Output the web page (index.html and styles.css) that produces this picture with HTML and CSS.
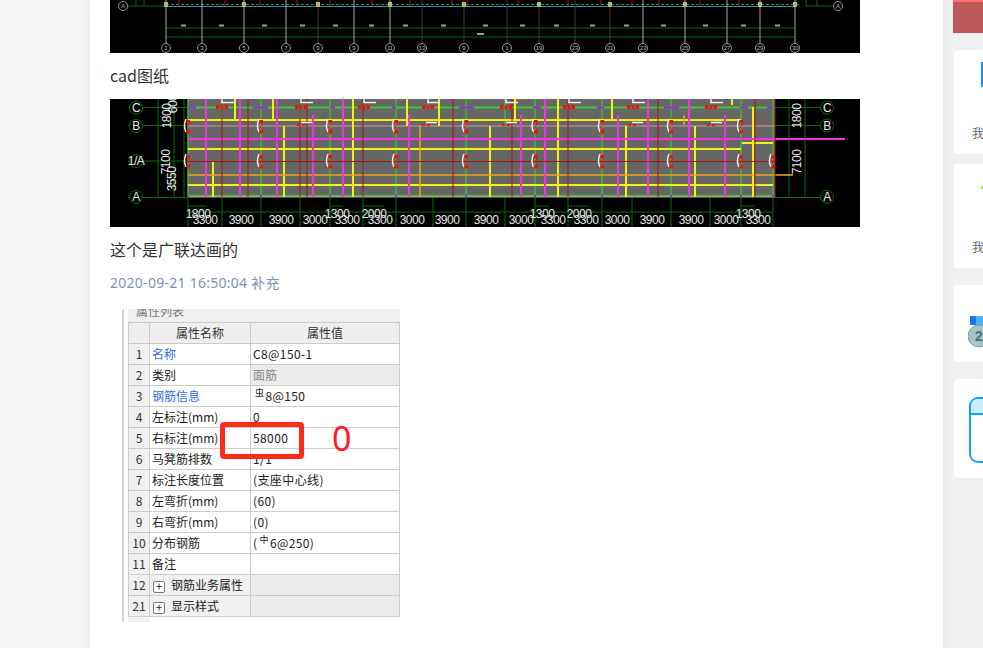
FILE: index.html
```html
<!DOCTYPE html>
<html lang="zh">
<head>
<meta charset="utf-8">
<title>cad图纸</title>
<link rel="stylesheet" href="styles.css">
</head>
<body>
<div class="page">
  <main class="post">
    <svg class="cad cad-top" viewBox="110 0 750 53" aria-label="cad drawing">
      <g class="thin-green">
        <path d="M128 6H166M136 0V6M144 0V6M805 6H833M817 0V6M806 0V6M166 28H795M166 37H795"/>
      </g>
      <path class="band-teal" d="M166 6.500H795"/>
      <path class="band-dash" d="M166 4.500H800"/>
      <g class="axis-bright">
        <path d="M166 0V43M202 0V43M244 0V43M286 0V43M354 0V43M390 0V43M643 0V43M685 0V43M727 0V43M760 0V43M795 0V43"/>
      </g>
      <g class="axis-dim">
        <path d="M318 0V43M422 0V43M464 0V43M507 0V43M539 0V43M575 0V43M610 0V43"/>
      </g>
      <g class="red-ticks">
        <path d="M179 0V6M225 0V6M260 0V6M297 0V6M330 0V6M372 0V6M410 0V6M452 0V6M467 0V6M518 0V6M568 0V6M601 0V6M632 0V6M659 0V6M700 0V6M739 0V6"/>
      </g>
      <g class="col-caps">
        <rect x="164" y="2" width="4" height="5"/><rect x="242" y="2" width="4" height="5"/><rect x="316" y="2" width="4" height="5"/><rect x="388" y="2" width="4" height="5"/><rect x="462" y="2" width="4" height="5"/><rect x="537" y="2" width="4" height="5"/><rect x="608" y="2" width="4" height="5"/><rect x="683" y="2" width="4" height="5"/><rect x="758" y="2" width="4" height="5"/><rect x="793" y="2" width="4" height="5"/>
      </g>
      <g class="bubbles">
        <circle cx="123" cy="6" r="4.500"/><circle cx="838" cy="6" r="4.500"/>
        <circle cx="166" cy="48" r="4.500"/><circle cx="202" cy="48" r="4.500"/><circle cx="244" cy="48" r="4.500"/><circle cx="286" cy="48" r="4.500"/><circle cx="318" cy="48" r="4.500"/><circle cx="354" cy="48" r="4.500"/><circle cx="390" cy="48" r="4.500"/><circle cx="422" cy="48" r="4.500"/><circle cx="464" cy="48" r="4.500"/><circle cx="507" cy="48" r="4.500"/><circle cx="539" cy="48" r="4.500"/><circle cx="575" cy="48" r="4.500"/><circle cx="610" cy="48" r="4.500"/><circle cx="643" cy="48" r="4.500"/><circle cx="685" cy="48" r="4.500"/><circle cx="727" cy="48" r="4.500"/><circle cx="760" cy="48" r="4.500"/><circle cx="795" cy="48" r="4.500"/>
      </g>
      <g class="bubble-nums">
        <text x="123" y="8">A</text><text x="838" y="8">A</text>
        <text x="166" y="50">1</text><text x="202" y="50">3</text><text x="244" y="50">5</text><text x="286" y="50">7</text><text x="318" y="50">9</text><text x="354" y="50">9</text><text x="390" y="50">11</text><text x="422" y="50">13</text><text x="464" y="50">9</text><text x="507" y="50">1</text><text x="539" y="50">19</text><text x="575" y="50">23</text><text x="610" y="50">21</text><text x="643" y="50">23</text><text x="685" y="50">25</text><text x="727" y="50">27</text><text x="760" y="50">29</text><text x="795" y="50">30</text>
      </g>
      <g class="tiny-dims">
        <path d="M181 25.500h5M219 25.500h5M262 25.500h5M300 25.500h5M333 25.500h5M369 25.500h5M403 25.500h5M441 25.500h5M483 25.500h5M520 25.500h5M554 25.500h5M590 25.500h5M624 25.500h5M661 25.500h5M703 25.500h5M741 25.500h5M775 25.500h5M477 34h7"/>
      </g>
    </svg>

    <p class="line">cad图纸</p>

    <svg class="cad cad-plan" viewBox="110 99 750 128" aria-label="cad plan">
      <defs>
        <g id="col-mark">
          <path class="mark-white" d="M-2 -7Q-5 0 -2 6"/>
          <path class="mark-red" d="M0 -6L1.500 -2L-1 1L1.500 4L0 7"/>
          <rect class="mark-fill" x="-1.500" y="-6" width="3.500" height="3.500"/>
          <rect class="mark-fill" x="-1.500" y="4" width="3.500" height="3.500"/>
        </g>
        <g id="top-mark">
          <rect class="mark-fill" x="0" y="0" width="3.500" height="4"/>
          <rect class="mark-fill" x="4.500" y="1" width="3" height="3"/>
          <rect class="mark-fill" x="8.500" y="0" width="3.500" height="4"/>
          <path class="mark-white" d="M5 -2.500H18M6 -6V-2.500"/>
        </g>
        <g id="low-mark">
          <rect class="mark-fill" x="0" y="0" width="3" height="2"/>
          <rect class="mark-fill" x="5" y="0" width="3" height="2"/>
          <path class="mark-white" d="M4 -1.500H15"/>
        </g>
      </defs>
      <rect class="plan-fill" x="188" y="99" width="587" height="98"/>
      <g class="dim-green">
        <path d="M128 107.500H188M775 107.500H822M128 125.500H188M775 125.500H822M128 161H188M128 197.500H188M775 197.500H822"/>
        <path d="M158 99V199M174 99V199M184 99V199M789 99V197M805 99V197"/>
        <path d="M188 197V227M222 197V227M261 197V227M300 197V227M330 197V227M363 197V227M396 197V227M433 197V227M466 197V227M505 197V227M535 197V227M568 197V227M602 197V227M632 197V227M671 197V227M710 197V227M741 197V227M773 197V227"/>
        <path d="M188 212H773M188 206H207M330 206H343M363 206H384M535 206H549M568 206H589M741 206H755"/>
      </g>
      <g class="plan-green">
        <path d="M188 107.500H775M188 196H775"/>
      </g>
      <g class="plan-green-thin">
        <path d="M188 99V197M261 99V197M330 99V197M396 99V197M466 99V197M535 99V197M602 99V197M671 99V197M741 99V197M773 99V197"/>
        <path d="M222 99V120M300 99V125M439 99V125M505 99V125"/>
      </g>
      <g class="plan-pale">
        <path d="M188 126H775M188 161.500H775M188 197H775"/>
      </g>
      <g class="plan-yellow">
        <path d="M188 120H741M188 149H741M188 185H773M742 143H773"/>
        <path d="M235 99V120M273 99V120M213 162V197M284 126V197M353 99V197M407 99V126M439 99V126M490 126V197M515 99V120M558 99V197M612 99V120M626 126V197M695 126V197M732 99V105M753 107V197"/>
      </g>
      <g class="plan-orange">
        <path d="M188 175H793M420 126V197M684 115V125"/>
      </g>
      <g class="plan-magenta">
        <path d="M188 139H845"/>
        <path d="M206 99V197M240 99V197M277 99V197M313 115V197M343 99V197M409 115V197M521 115V197M545 99V197M618 115V197M648 99V197M689 99V197M725 115V197"/>
      </g>
      <g class="plan-red">
        <path d="M188 161.500H775M775 99V197M222 99V197M248 99V197M300 99V197M307 99V197M363 99V197M453 99V197M512 99V197M568 99V197M658 99V197M755 99V197"/>
      </g>
      <g class="plan-purple">
        <path d="M188 107.500h8M253 107.500h15M330 107.500h5M392 107.500h4M459 107.500h15M533 107.500h8M597 107.500h7M664 107.500h15M740 107.500h8M767 107.500h6"/>
        <path d="M188 197v-2M261 197v-2M330 197v-2M396 197v-2M466 197v-2M535 197v-2M602 197v-2M671 197v-2M741 197v-2M773 197v-2"/>
      </g>
      <use href="#col-mark" x="188" y="126"/><use href="#col-mark" x="261" y="126"/><use href="#col-mark" x="330" y="126"/><use href="#col-mark" x="396" y="126"/><use href="#col-mark" x="466" y="126"/><use href="#col-mark" x="535.500" y="126"/><use href="#col-mark" x="602" y="126"/><use href="#col-mark" x="671" y="126"/><use href="#col-mark" x="741" y="126"/>
      <use href="#col-mark" x="188" y="161"/><use href="#col-mark" x="261" y="161"/><use href="#col-mark" x="330" y="161"/><use href="#col-mark" x="396" y="161"/><use href="#col-mark" x="466" y="161"/><use href="#col-mark" x="535.500" y="161"/><use href="#col-mark" x="602" y="161"/><use href="#col-mark" x="671" y="161"/><use href="#col-mark" x="741" y="161"/><use href="#col-mark" x="773" y="161"/>
      <use href="#top-mark" x="216" y="105"/><use href="#top-mark" x="295" y="105"/><use href="#top-mark" x="358" y="105"/><use href="#top-mark" x="422" y="105"/><use href="#top-mark" x="500" y="105"/><use href="#top-mark" x="563" y="105"/><use href="#top-mark" x="627" y="105"/><use href="#top-mark" x="705" y="105"/>
      <use href="#low-mark" x="297" y="124"/><use href="#low-mark" x="422" y="124"/><use href="#low-mark" x="502" y="124"/><use href="#low-mark" x="628" y="124"/><use href="#low-mark" x="707" y="124"/>
      <g class="bubbles-green">
        <circle cx="136" cy="108" r="6.500"/><circle cx="136" cy="126" r="6.500"/><circle cx="136" cy="161" r="6.500"/><circle cx="136" cy="197" r="6.500"/>
        <circle cx="827" cy="107.500" r="6.500"/><circle cx="827" cy="125.500" r="6.500"/><circle cx="827" cy="197" r="6.500"/>
      </g>
      <g class="cad-label">
        <text x="136" y="112" text-anchor="middle">C</text>
        <text x="136" y="130" text-anchor="middle">B</text>
        <text x="136" y="165" text-anchor="middle">1/A</text>
        <text x="136" y="201" text-anchor="middle">A</text>
        <text x="827" y="111.500" text-anchor="middle">C</text>
        <text x="827" y="129.500" text-anchor="middle">B</text>
        <text x="827" y="201" text-anchor="middle">A</text>
        <text transform="translate(171 116) rotate(-90)" text-anchor="middle">1800</text>
        <text transform="translate(177 104) rotate(-90)" text-anchor="middle">600</text>
        <text transform="translate(170 162) rotate(-90)" text-anchor="middle">7100</text>
        <text transform="translate(176 179) rotate(-90)" text-anchor="middle">3550</text>
        <text transform="translate(801 116) rotate(-90)" text-anchor="middle">1800</text>
        <text transform="translate(801 162) rotate(-90)" text-anchor="middle">7100</text>
        <text x="198" y="218" text-anchor="middle">1800</text><text x="337" y="218" text-anchor="middle">1300</text><text x="374" y="218" text-anchor="middle">2000</text><text x="542" y="218" text-anchor="middle">1300</text><text x="579" y="218" text-anchor="middle">2000</text><text x="748" y="218" text-anchor="middle">1300</text>
        <text x="205" y="224" text-anchor="middle">3300</text><text x="241" y="224" text-anchor="middle">3900</text><text x="281" y="224" text-anchor="middle">3900</text><text x="315" y="224" text-anchor="middle">3000</text><text x="347" y="224" text-anchor="middle">3300</text><text x="380" y="224" text-anchor="middle">3300</text><text x="412" y="224" text-anchor="middle">3000</text><text x="447" y="224" text-anchor="middle">3900</text><text x="486" y="224" text-anchor="middle">3900</text><text x="521" y="224" text-anchor="middle">3000</text><text x="553" y="224" text-anchor="middle">3300</text><text x="586" y="224" text-anchor="middle">3300</text><text x="617" y="224" text-anchor="middle">3000</text><text x="652" y="224" text-anchor="middle">3900</text><text x="691" y="224" text-anchor="middle">3900</text><text x="726" y="224" text-anchor="middle">3000</text><text x="758" y="224" text-anchor="middle">3300</text>
      </g>
    </svg>

    <p class="line line-tight">这个是广联达画的</p>
    <p class="stamp">2020-09-21 16:50:04 补充</p>

    <div class="shot">
      <div class="shot-rail"></div>
      <div class="shot-body">
        <div class="shot-title">属性列表</div>
        <table class="props">
          <colgroup><col class="col-n"><col class="col-k"><col class="col-v"></colgroup>
          <thead><tr><th></th><th>属性名称</th><th>属性值</th></tr></thead>
          <tbody>
            <tr><td class="num">1</td><td class="link">名称</td><td class="val">C8@150-1</td></tr>
            <tr><td class="num">2</td><td>类别</td><td class="locked">面筋</td></tr>
            <tr><td class="num">3</td><td class="link">钢筋信息</td><td class="val"><sup class="rebar">虫</sup>8@150</td></tr>
            <tr><td class="num">4</td><td>左标注(mm)</td><td class="val">0</td></tr>
            <tr><td class="num">5</td><td>右标注(mm)</td><td class="val">58000</td></tr>
            <tr><td class="num">6</td><td>马凳筋排数</td><td class="val">1/1</td></tr>
            <tr><td class="num">7</td><td>标注长度位置</td><td class="val">(支座中心线)</td></tr>
            <tr><td class="num">8</td><td>左弯折(mm)</td><td class="val">(60)</td></tr>
            <tr><td class="num">9</td><td>右弯折(mm)</td><td class="val">(0)</td></tr>
            <tr><td class="num">10</td><td>分布钢筋</td><td class="val">(<sup class="rebar">中</sup>6@250)</td></tr>
            <tr><td class="num">11</td><td>备注</td><td></td></tr>
            <tr class="group"><td class="num">12</td><td><span class="plus">+</span>钢筋业务属性</td><td></td></tr>
            <tr class="group"><td class="num">21</td><td><span class="plus">+</span>显示样式</td><td></td></tr>
          </tbody>
        </table>
        <div class="shot-foot"></div>
      </div>
      <div class="note-box"></div>
      <div class="note-zero">0</div>
    </div>
  </main>

  <aside class="side">
    <div class="banner"></div>
    <section class="card card-a">
      <span class="blue-bar"></span>
      <span class="card-text">我</span>
    </section>
    <section class="card card-b">
      <span class="green-dot"></span>
      <span class="card-text">我</span>
    </section>
    <section class="card card-c">
      <svg class="medal" viewBox="0 0 30 34" aria-hidden="true">
        <rect x="2" y="0" width="6" height="9" fill="#1677f0"/>
        <rect x="8" y="0" width="22" height="9" fill="#4db2f7"/>
        <circle cx="11" cy="20" r="11" fill="#a6c3c6" stroke="#7b9ea3" stroke-width="1"/>
        <text x="7" y="25" class="medal-num">2</text>
      </svg>
    </section>
    <section class="card card-d">
      <div class="planner"><div class="planner-head"></div></div>
    </section>
  </aside>
</div>
</body>
</html>
```

FILE: styles.css
```css
* { box-sizing: border-box; }
html, body { margin: 0; padding: 0; }
body {
  background: #f3f4f5;
  font-family: "Noto Sans CJK SC", "Noto Sans", sans-serif;
  color: #333;
}
.page {
  display: flex;
  width: 983px;
  height: 648px;
  overflow: hidden;
  padding-left: 90px;
}
.post {
  position: relative;
  z-index: 1;
  flex: 0 0 853px;
  height: 648px;
  background: #fff;
  padding: 0 83px 0 20px;
  box-shadow: 0 0 10px rgba(0, 0, 0, 0.07);
}
.cad { display: block; width: 750px; background: #000; }
.cad-top { height: 53px; }
.cad-plan { height: 128px; }
.line {
  margin: 9px 0 11px;
  font-size: 16px;
  line-height: 26px;
  color: #333;
}
.line-tight { margin-bottom: 8px; }
.stamp {
  margin: 0 0 13px;
  font-size: 14px;
  line-height: 26px;
  letter-spacing: 0.27px;
  color: #7a93b5;
  font-family: "Noto Sans", "Noto Sans CJK SC", sans-serif;
}

/* drawing strokes */
.cad path, .cad circle { fill: none; }
.thin-green path { stroke: #0b6b0b; stroke-width: 1; }
.band-teal { stroke: #2b9a9a; stroke-width: 1; }
.band-dash { stroke: #2f7f7f; stroke-width: 1; stroke-dasharray: 3 2; }
.axis-bright path { stroke: #a8a8a8; stroke-width: 1; }
.axis-dim path { stroke: #3c3c3c; stroke-width: 1; }
.red-ticks path { stroke: #b01818; stroke-width: 1; }
.col-caps rect { fill: #b9b66e; }
.bubbles circle { stroke: #9a9a9a; stroke-width: 1; fill: #000; }
.bubble-nums text {
  fill: #b5b5b5;
  font-family: "Liberation Sans", sans-serif;
  font-size: 6px;
  text-anchor: middle;
}
.tiny-dims path { stroke: #9c9c9c; stroke-width: 2; }
.plan-fill { fill: #666; }
.dim-green path { stroke: #0b6b0b; stroke-width: 1; }
.plan-green path { stroke: #38c838; stroke-width: 2; }
.plan-green-thin path { stroke: #3fb83f; stroke-width: 1.500; }
.plan-pale path { stroke: #d09a9a; stroke-width: 1; }
.plan-yellow path { stroke: #f4f014; stroke-width: 2; }
.plan-orange path { stroke: #e6a818; stroke-width: 1.500; }
.plan-magenta path { stroke: #f034e0; stroke-width: 2; }
.plan-red path { stroke: #a81414; stroke-width: 1; }
.plan-purple path { stroke: #9a24e0; stroke-width: 2; }
.mark-white { stroke: #eee; stroke-width: 1.500; }
.mark-red { stroke: #f01010; stroke-width: 1; }
.mark-fill { fill: #f01010; }
.bubbles-green circle { stroke: #0b6b0b; stroke-width: 1; fill: #000; }
.cad-label text {
  fill: #e8e8e8;
  font-family: "Liberation Sans", sans-serif;
  font-size: 12px;
  letter-spacing: -0.5px;
}

/* pasted software screenshot */
.shot {
  position: relative;
  display: flex;
  width: 278px;
  height: 313px;
  margin-left: 12px;
  overflow: hidden;
}
.shot-rail {
  flex: 0 0 6px;
  border-left: 2px solid #d4d4d4;
}
.shot-body { flex: 1; }
.shot-title {
  height: 13px;
  padding-left: 8px;
  background: #f0f0f0;
  font-size: 12px;
  line-height: 3px;
  color: #777;
  overflow: hidden;
}
.props {
  border-collapse: collapse;
  table-layout: fixed;
  width: 272px;
  font-size: 12px;
  color: #222;
}
.col-n { width: 21px; }
.col-k { width: 101px; }
.props th, .props td {
  height: 21px;
  padding: 0 2px;
  border: 1px solid #ccc;
  font-weight: 400;
  line-height: 14px;
  white-space: nowrap;
  overflow: hidden;
}
.props th { background: #efefef; color: #333; text-align: center; }
.props .num { background: #f0f0f0; text-align: center; padding: 0; color: #333; }
.val { letter-spacing: 0.4px; }
.link { color: #3169e6; }
.locked { background: #ebebeb; color: #888; }
.group td { background: #ebebeb; }
.group td:nth-child(2) { background: #f1f1f1; }
.rebar { font-size: 9px; line-height: 0; margin: 0 1px 0 2px; }
.plus {
  display: inline-block;
  width: 12px;
  height: 12px;
  margin: 0 6px 0 1px;
  border: 1px solid #777;
  border-radius: 2px;
  background: #fff;
  font-size: 11px;
  line-height: 9px;
  text-align: center;
  vertical-align: -1px;
}
.shot-foot { width: 22px; height: 5px; background: #f0f0f0; }
.note-box {
  position: absolute;
  left: 98px;
  top: 113px;
  width: 84px;
  height: 37px;
  border: 5px solid #ff2a1a;
  border-radius: 4px;
}
.note-zero {
  position: absolute;
  left: 210px;
  top: 105px;
  font-family: "Noto Sans", sans-serif;
  font-size: 34px;
  line-height: 48px;
  color: #ff1c1c;
}

/* right column */
.side {
  flex: 0 0 40px;
  overflow: hidden;
  background: #f0f1f2;
  padding-left: 10px;
}
.banner {
  height: 33px;
  background: #bd5a59;
  border-top: 2px solid #ff6a6a;
}
.card {
  position: relative;
  width: 120px;
  margin: 17px 0 0 1px;
  background: #fff;
  border-radius: 4px;
}
.card-a { height: 104px; }
.card-b { height: 104px; margin-top: 10px; }
.card-c { height: 77px; }
.card-d { height: 99px; }
.card-text {
  position: absolute;
  left: 18px;
  bottom: 13px;
  font-size: 12px;
  line-height: 16px;
  color: #666;
}
.blue-bar {
  position: absolute;
  left: 27px;
  top: 12px;
  width: 3px;
  height: 25px;
  background: #1890ff;
}
.green-dot {
  position: absolute;
  left: 27px;
  top: 22px;
  width: 3px;
  height: 3px;
  border-radius: 50%;
  background: #9ad04c;
}
.medal {
  position: absolute;
  left: 14px;
  top: 31px;
  width: 30px;
  height: 34px;
}
.medal-num {
  font-family: "Liberation Sans", sans-serif;
  font-weight: 700;
  font-size: 14px;
  fill: #4f6f75;
}
.planner {
  position: absolute;
  left: 15px;
  top: 18px;
  width: 70px;
  height: 66px;
  border: 2px solid #0aa5ff;
  border-radius: 9px;
  overflow: hidden;
}
.planner-head {
  height: 16px;
  background: #cdeeff;
  border-bottom: 2px solid #0aa5ff;
}
```
